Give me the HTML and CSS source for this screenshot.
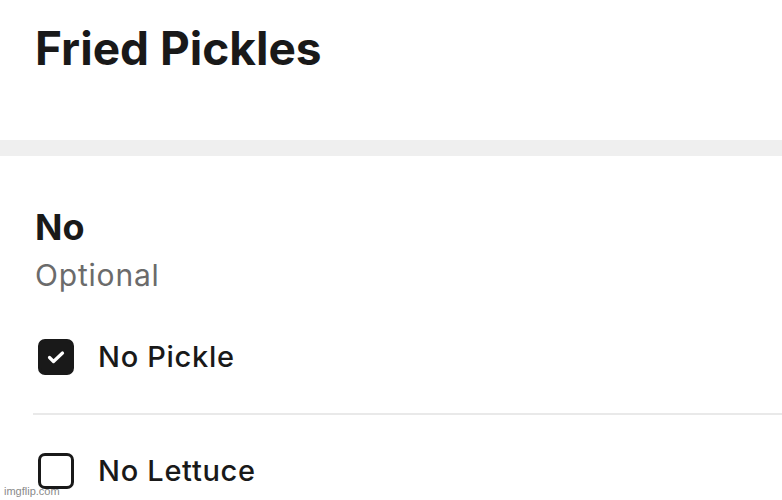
FILE: index.html
```html
<!DOCTYPE html>
<html lang="en">
<head>
  <meta charset="UTF-8" />
  <title>Fried Pickles</title>
  <link rel="stylesheet" href="styles.css">
</head>
<body>
  <div class="header">
    <h1>Fried Pickles</h1>
  </div>
  <div class="band"></div>

  <div class="group">
    <h2>No</h2>
    <p class="hint">Optional</p>

    <label class="option">
      <span class="box checked">
        <svg viewBox="0 0 24 24" width="24" height="24"><path d="M5.5 12.5l4 4L18.5 8" fill="none" stroke="#fff" stroke-width="3.2" stroke-linecap="round" stroke-linejoin="round"/></svg>
      </span>
      <span class="label">No Pickle</span>
    </label>
    <div class="divider"></div>
    <label class="option last">
      <span class="box"></span>
      <span class="label">No Lettuce</span>
    </label>
  </div>

  <div class="watermark">imgflip.com</div>
</body>
</html>
```

FILE: styles.css
```css
body {
  margin: 0;
  font-family: Inter, "Noto Sans", sans-serif;
  color: #191919;
  background: #fff;
  overflow: hidden;
}
.header {
  height: 140px;
  box-sizing: border-box;
  padding: 20px 0 0 35px;
}
h1 {
  margin: 0;
  font-size: 46px;
  line-height: 56px;
  font-weight: 700;
}
.band {
  height: 16px;
  background: #efefef;
}
.group {
  padding: 49px 0 0 33px;
}
h2 {
  margin: 0 0 0 2px;
  font-size: 36px;
  font-weight: 700;
  line-height: 44px;
}
.hint {
  margin: 8px 0 8px 2px;
  font-size: 30px;
  color: #6b6b6b;
  line-height: 36px;
  letter-spacing: 0.8px;
}
.option {
  display: flex;
  align-items: center;
  gap: 24px;
  padding: 38px 0 38px 5px;
}
.option.last {
  padding-bottom: 0;
}
.box {
  width: 36px;
  height: 36px;
  flex: none;
  box-sizing: border-box;
  border: 3px solid #191919;
  border-radius: 7px;
  display: flex;
  align-items: center;
  justify-content: center;
}
.box.checked {
  background: #191919;
}
.label {
  font-size: 29px;
  line-height: 36px;
  font-weight: 500;
  letter-spacing: 0.7px;
}
.divider {
  height: 2px;
  background: #e9e9e9;
}
.watermark {
  position: absolute;
  left: 4px;
  bottom: 3px;
  font-family: "Liberation Sans", sans-serif;
  font-size: 11px;
  color: #8a8a8a;
}
```
